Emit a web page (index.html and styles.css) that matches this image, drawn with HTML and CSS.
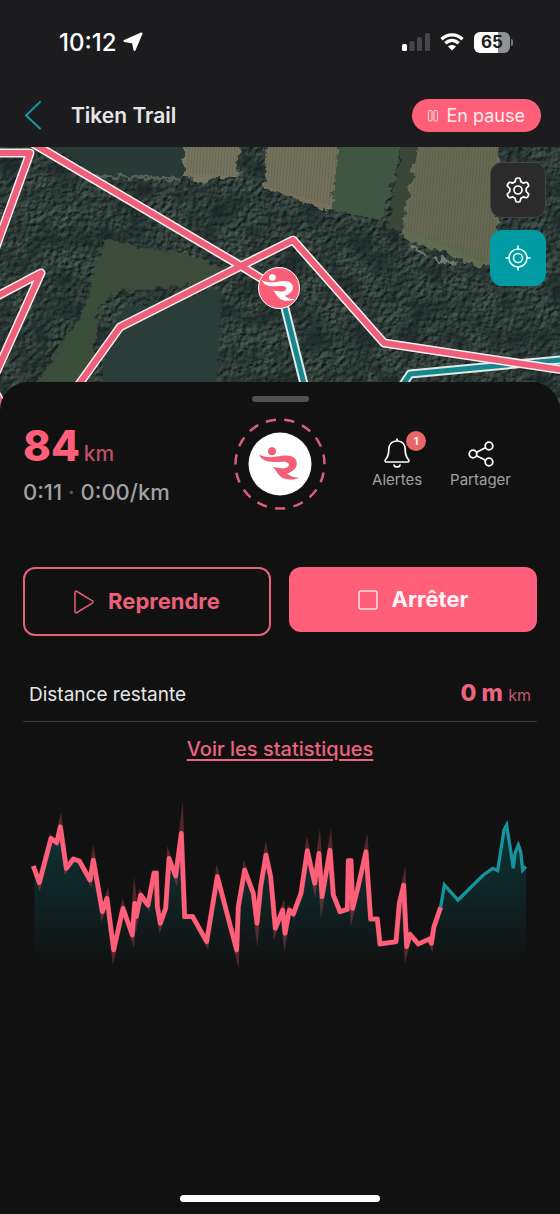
FILE: index.html
```html
<!DOCTYPE html>
<html lang="fr">
<head>
<meta charset="utf-8">
<meta name="viewport" content="width=device-width, initial-scale=1">
<title>Tiken Trail</title>
<link rel="stylesheet" href="styles.css">
</head>
<body>
<svg class="defs" aria-hidden="true">
  <symbol id="runner" viewBox="0 0 188 188">
    <circle cx="70" cy="56" r="12"/>
    <path d="M32 66C50 77 80 74 104 69C130 65 147 78 144 96C142 110 128 117 115 123C126 131 138 135 152 135C136 143 108 142 96 132C85 122 82 112 73 103L98 107C113 108 124 100 120 93C114 84 96 88 80 88C60 89 38 84 32 66Z"/>
  </symbol>
</svg>
<header class="top">
  <div class="status">
    <div class="status-time">
      <span>10:12</span>
      <svg width="20" height="20" viewBox="0 0 20 20"><path d="M18.500 1.500L11.500 18L10 10.500L1.500 9Z" fill="#fff" stroke="#fff" stroke-width="2" stroke-linejoin="round"/></svg>
    </div>
    <div class="status-icons">
      <svg width="28" height="20" viewBox="0 0 28 20"><rect y="12" width="5" height="7" rx="1.500" fill="#fff"/><g fill="#47474a"><rect x="7.500" y="9" width="5" height="10" rx="1.500"/><rect x="15" y="5" width="5" height="14" rx="1.500"/><rect x="23" y="1" width="5" height="18" rx="1.500"/></g></svg>
      <svg width="24" height="20" viewBox="0 0 24 20"><g fill="none" stroke="#fff" stroke-width="3.400"><path d="M1.500 7.200C7.500 1.400 16.500 1.400 22.500 7.200"/><path d="M5.300 11.200C9.300 7.500 14.700 7.500 18.700 11.200"/></g><path d="M8 14.500C10.300 12.500 13.700 12.500 16 14.500L12 18.600Z" fill="#fff"/></svg>
      <div class="battery"><span>65</span></div>
    </div>
  </div>
  <div class="nav">
    <button class="back" aria-label="Retour"><svg width="18" height="30" viewBox="0 0 18 30"><path d="M16 1L2 14.500L16 27.500" fill="none" stroke="#0d9ba0" stroke-width="2" stroke-linecap="round" stroke-linejoin="round"/></svg></button>
    <h1>Tiken Trail</h1>
    <div class="pill">
      <svg width="10" height="12" viewBox="0 0 10 12" fill="none" stroke="#ffe3e7"><rect x=".5" y=".5" width="3.500" height="10.500" rx="1"/><rect x="6" y=".5" width="3.500" height="10.500" rx="1"/></svg>
      <span>En pause</span>
    </div>
  </div>
</header>
<main>
  <section class="map">
    <svg class="map-view" viewBox="0 147 560 263" role="img" aria-label="Carte du parcours">
      <defs>
        <filter id="trees" x="0" y="0" width="100%" height="100%" color-interpolation-filters="sRGB">
          <feTurbulence type="fractalNoise" baseFrequency=".2" numOctaves="3" seed="8" result="n"/>
          <feDiffuseLighting in="n" surfaceScale="1.800" diffuseConstant="1" lighting-color="#4d625a"><feDistantLight azimuth="230" elevation="42"/></feDiffuseLighting>
        </filter>
        <filter id="shade" x="0" y="0" width="100%" height="100%" color-interpolation-filters="sRGB">
          <feTurbulence type="fractalNoise" baseFrequency=".04" numOctaves="4" seed="3"/>
          <feColorMatrix values="0 0 0 0 .1  0 0 0 0 .15  0 0 0 0 .15  1.800 0 0 0 -.65"/>
        </filter>
        <filter id="rough" x="-5%" y="-5%" width="110%" height="110%" color-interpolation-filters="sRGB">
          <feTurbulence type="fractalNoise" baseFrequency=".12" numOctaves="3" seed="5" result="n"/>
          <feDisplacementMap in="SourceGraphic" in2="n" scale="12" xChannelSelector="R" yChannelSelector="G"/>
        </filter>
        <pattern id="rows" width="3" height="8" patternUnits="userSpaceOnUse" patternTransform="rotate(5)"><rect width="1" height="8" fill="#3f4a3c" fill-opacity=".3"/></pattern>
      </defs>
      <rect y="147" width="560" height="263" fill="#2d3b36"/>
      <rect y="147" width="560" height="263" filter="url(#trees)"/>
      <rect y="147" width="560" height="263" filter="url(#shade)"/>
      <g filter="url(#rough)">
        <path d="M42 143H184V177L140 178L96 173Z" fill="#273a36"/>
        <path d="M92 176L182 179" stroke="#59625a" stroke-width="3"/>
        <path d="M184 143H240L238 178L212 178L204 184L184 176Z" fill="#77755f"/>
        <path d="M267 143H338L332 210L302 202L264 188Z" fill="#74715c"/>
        <path d="M338 143H402L392 180L382 222L332 210Z" fill="#3f5742"/>
        <path d="M402 143H422L402 230H388Z" fill="#394638"/>
        <path d="M419 143H498L498 262L482 265L402 230Z" fill="#686a54"/>
        <path d="M402 228L484 254L482 268L402 237Z" fill="#626a51"/>
        <path d="M104 237L135 246L180 253L216 265L236 270L210 282L168 287L112 292L98 310L94 350L84 386H34L52 360L84 310Z" fill="#3c4b3a"/>
        <path d="M102 240L82 320L44 386H80L95 310Z" fill="#3a4f3a"/>
        <path d="M120 308L170 298L221 288L220 330L216 386H104L106 352Z" fill="#2a3d38"/>
        <path d="M412 247L426 253M433 257L458 265" stroke="#6f7872" stroke-width="3"/>
      </g>
      <path d="M186 147H240L238 176L186 174ZM267 147H338L332 206L264 186ZM419 147H498V260L482 262L404 230Z" fill="url(#rows)"/>
      <g fill="none" stroke-linejoin="round" stroke-linecap="round">
        <g stroke="#dfe9e8" stroke-width="9"><path d="M283 300L306 392M398 392L410 374L570 359"/></g>
        <g stroke="#16888d" stroke-width="5"><path d="M283 300L306 392M398 392L410 374L570 359"/></g>
        <g stroke="#fbf0f0" stroke-width="9"><path d="M-10 153H30L-8 258M34 144L241 266L280 290M-10 300L41 273L-10 386M-8 386L2 405M72 394L120 327L241 266L293 240L384 343L570 371"/></g>
        <g stroke="#ee5f7b" stroke-width="6"><path d="M-10 153H30L-8 258M34 144L241 266L280 290M-10 300L41 273L-10 386M-8 386L2 405M72 394L120 327L241 266L293 240L384 343L570 371"/></g>
      </g>
      <circle cx="279" cy="288" r="20.500" fill="#fb5f78" stroke="#fff"/>
      <use href="#runner" x="253" y="262" width="52" height="52" fill="#fff"/>
    </svg>
    <div class="map-tools">
      <button class="tool" aria-label="Réglages"><svg width="28" height="28" viewBox="0 0 28 28" fill="none" stroke="#fff" stroke-width="1.700" stroke-linejoin="round"><circle cx="14" cy="14" r="4"/><path d="M11.700 3.300Q12 2 13.200 2H14.800Q16 2 16.300 3.300L16.900 5.800L19.200 7.100L21.700 6.400Q22.900 6 23.600 7.100L24.400 8.500Q25 9.700 24.100 10.500L22.200 12.500V15.500L24.100 17.500Q25 18.300 24.400 19.500L23.600 20.900Q22.900 22 21.700 21.600L19.200 20.900L16.900 22.200L16.300 24.700Q16 26 14.800 26H13.200Q12 26 11.700 24.700L11.100 22.200L8.800 20.900L6.300 21.600Q5.100 22 4.400 20.900L3.600 19.500Q3 18.300 3.900 17.500L5.800 15.500V12.500L3.900 10.500Q3 9.700 3.600 8.500L4.400 7.100Q5.100 6 6.300 6.400L8.800 7.100L11.100 5.800Z"/></svg></button>
      <button class="tool tool-active" aria-label="Me localiser"><svg width="26" height="26" viewBox="0 0 26 26" fill="none" stroke="#e9ffff" stroke-width="1.600" stroke-linecap="round"><circle cx="13" cy="13" r="9"/><circle cx="13" cy="13" r="4.500"/><path d="M13 1V4M13 22V25M1 13H4M22 13H25"/></svg></button>
    </div>
  </section>
  <section class="sheet">
    <div class="handle"></div>
    <div class="summary">
      <div class="figures">
        <p class="distance"><strong>84</strong><span>km</span></p>
        <p class="pace">0:11 <i>·</i> 0:00/km</p>
      </div>
      <svg class="badge" width="92" height="92" viewBox="0 0 92 92" role="img" aria-label="Coureur">
        <circle cx="46" cy="46" r="44.500" fill="none" stroke="#dc5f78" stroke-width="2.500" stroke-dasharray="10.200 8.440" stroke-dashoffset="10"/>
        <circle cx="46" cy="46" r="31.500" fill="#fff"/>
        <use href="#runner" x="14.500" y="14.500" width="63" height="63" fill="#f25f77"/>
      </svg>
      <div class="actions">
        <button class="action">
          <svg width="28" height="30" viewBox="0 0 28 30" fill="none" stroke="#fff" stroke-width="1.700" stroke-linecap="round" stroke-linejoin="round"><path d="M14 1V3M14 3C8.500 3 5.800 7 5.800 11.500C5.800 17 5 19 2.300 22C1.800 23 2.200 24 3.300 24H24.700C25.800 24 26.200 23 25.700 22C23 19 22.200 17 22.200 11.500C22.200 7 19.500 3 14 3ZM11 27C11.500 29.500 16.500 29.500 17 27"/></svg>
          <span>Alertes</span>
          <b class="count">1</b>
        </button>
        <button class="action">
          <svg width="28" height="30" viewBox="0 0 28 30" fill="none" stroke="#fff" stroke-width="1.800"><circle cx="6" cy="16" r="3.800"/><circle cx="22" cy="8" r="3.800"/><circle cx="22" cy="24" r="3.800"/><path d="M9.500 14.300L18.500 9.700M9.500 17.700L18.500 22.300"/></svg>
          <span>Partager</span>
        </button>
      </div>
    </div>
    <div class="controls">
      <button class="control control-outline"><svg width="20" height="24" viewBox="0 0 20 24"><path d="M1 2.500Q1 .5 3 1.500L18 10.500Q20 12 18 13.500L3 22.500Q1 23.500 1 21.500Z" fill="none" stroke="#e25f7a" stroke-width="1.500"/></svg><span>Reprendre</span></button>
      <button class="control control-solid"><svg width="20" height="20" viewBox="0 0 20 20"><rect x="1" y="1" width="18" height="18" rx="2" fill="none" stroke="#ffdde3" stroke-width="1.500"/></svg><span>Arrêter</span></button>
    </div>
    <div class="remaining"><span>Distance restante</span><span class="remaining-value"><strong>0 m</strong> <small>km</small></span></div>
    <a class="stats-link" href="#stats">Voir les statistiques</a>
    <svg class="chart" id="stats" viewBox="9 0 1542 570" role="img" aria-label="Profil du parcours">
      <defs>
        <linearGradient id="fade" gradientUnits="userSpaceOnUse" x1="0" y1="120" x2="0" y2="520"><stop offset="0" stop-color="#078087" stop-opacity=".3"/><stop offset=".5" stop-color="#078087" stop-opacity=".17"/><stop offset="1" stop-color="#078087" stop-opacity="0"/></linearGradient>
      </defs>
      <path fill="url(#fade)" d="M43 520V228L58 278L93 145L110 158L121 115L139 235L160 207L178 213L210 270L220 215L247 365L261 330L281 480L309 355L337 435L344 345L349 380L362 315L384 345L406 243L412 350L421 400L437 355L447 210L467 258L484 130L494 380H518L560 455L592 262L650 480L655 350L674 245L700 310L711 400L722 290L738 200L752 260L766 415L788 360L795 430L808 360L820 372L843 310L862 185L884 280L897 190L906 320L930 185L940 315L960 365L982 358L988 206L998 355L1012 300L1038 190L1052 387H1072L1080 462L1128 455L1138 340L1151 290L1160 470L1170 433L1195 462L1228 447L1234 460L1242 410L1262 352L1273 285L1314 330L1390 255L1418 235L1433 242L1452 120L1460 105L1480 235L1485 190L1495 165L1502 185L1508 240L1518 230V520Z"/>
      <g fill="none">
        <path stroke="#15949b" stroke-width="10" d="M1262 352L1273 285L1314 330L1390 255L1418 235L1433 242L1452 120L1460 105L1480 235L1485 190L1495 165L1502 185L1508 240L1518 230"/>
        <path class="halo" d="M40 228L58 278L93 145L110 158L121 110L139 235L160 207L178 213L210 270L220 210L247 365L261 325L281 480L309 355L337 435L344 340L349 380L362 315L384 345L402 249H409L412 350L421 400L437 355L447 205L467 258L484 130L494 380H518L560 455L592 260L650 480L655 350L674 240L700 310L711 400L722 290L738 195L752 260L766 415L788 360L795 430L808 360L820 372L843 310L862 182L884 280L897 190L906 320L930 180L940 315L960 365L982 358L985 212H993L998 355L1012 300L1038 185L1052 387H1072L1080 462L1128 455L1138 340L1151 285L1160 470L1170 433L1195 462L1228 447L1234 460L1242 410L1262 352"/>
        <path class="line" d="M40 228L58 278L93 145L110 158L121 110L139 235L160 207L178 213L210 270L220 210L247 365L261 325L281 480L309 355L337 435L344 340L349 380L362 315L384 345L402 249H409L412 350L421 400L437 355L447 205L467 258L484 130L494 380H518L560 455L592 260L650 480L655 350L674 240L700 310L711 400L722 290L738 195L752 260L766 415L788 360L795 430L808 360L820 372L843 310L862 182L884 280L897 190L906 320L930 180L940 315L960 365L982 358L985 212H993L998 355L1012 300L1038 185L1052 387H1072L1080 462L1128 455L1138 340L1151 285L1160 470L1170 433L1195 462L1228 447L1234 460L1242 410L1262 352"/>
      </g>
    </svg>
    <div class="home-bar"></div>
  </section>
</main>
</body>
</html>
```

FILE: styles.css
```css
* { box-sizing: border-box; }

body {
  margin: 0;
  min-height: 100vh;
  display: flex;
  flex-direction: column;
  background: #111;
  color: #e6e6e6;
  font-family: Inter, "Liberation Sans", sans-serif;
}

h1, p { margin: 0; }

button {
  border: 0;
  padding: 0;
  background: none;
  color: inherit;
  font: inherit;
  cursor: pointer;
}

svg { flex: none; }
.defs { position: absolute; width: 0; height: 0; }

.top { background: #1c1c1e; }

.status {
  display: flex;
  justify-content: space-between;
  align-items: center;
  height: 84px;
  padding: 0 50px 0 59px;
}

.status-time {
  display: flex;
  align-items: center;
  gap: 7px;
  color: #fff;
  font-size: 24px;
  font-weight: 500;
}

.status-icons { display: flex; align-items: center; gap: 10px; }

.battery {
  position: relative;
  width: 36px;
  height: 21px;
  border-radius: 6px;
  background: linear-gradient(90deg, #fff 66%, #929294 66%);
  color: #1c1c1e;
  font-size: 17px;
  font-weight: 700;
  line-height: 21px;
  text-align: center;
}

.battery::after {
  content: "";
  position: absolute;
  left: 37px;
  top: 7px;
  width: 2px;
  height: 7px;
  border-radius: 0 2px 2px 0;
  background: #77777a;
}

.nav {
  display: flex;
  align-items: center;
  height: 63px;
  padding: 0 19px 0 24px;
}

.back { display: flex; }

.nav h1 {
  flex: 1;
  margin-left: 29px;
  font-size: 21px;
  font-weight: 600;
}

.pill {
  display: flex;
  align-items: center;
  gap: 9px;
  height: 33px;
  padding: 0 16px;
  border-radius: 17px;
  background: #ff5f78;
  color: #ffedef;
  font-size: 18px;
}

main { flex: 1; display: flex; flex-direction: column; }

.map { position: relative; overflow: hidden; }
.map-view { display: block; width: 100%; }

.map-tools {
  position: absolute;
  top: 15px;
  right: 14px;
  display: grid;
  gap: 12px;
}

.tool {
  display: grid;
  place-items: center;
  width: 56px;
  height: 56px;
  border: 1px solid #454547;
  border-radius: 12px;
  background: #2b2b2c;
}

.tool-active { border-color: #019ba3; background: #019ba3; }

.sheet {
  position: relative;
  flex: 1;
  display: flex;
  flex-direction: column;
  margin-top: -28px;
  padding: 14px 23px 12px;
  border-radius: 28px 28px 0 0;
  background: #111;
}

.handle {
  align-self: center;
  width: 57px;
  height: 6px;
  border-radius: 3px;
  background: #515151;
}

.summary {
  display: grid;
  grid-template-columns: 1fr auto 1fr;
  align-items: center;
  margin-top: 16px;
}

.distance {
  display: flex;
  align-items: baseline;
  gap: 4px;
  color: #ff5f78;
  line-height: 48px;
}
.distance strong { font-size: 42px; font-weight: 800; }
.distance span { color: #bd5065; font-size: 21px; font-weight: 500; }

.pace {
  color: #a1a1a1;
  font-size: 22px;
  font-weight: 500;
  line-height: 28px;
}
.pace i { color: #5b5b5b; font-style: normal; }

.actions {
  display: flex;
  justify-content: flex-end;
  gap: 28px;
  padding-right: 26px;
}

.action {
  position: relative;
  display: grid;
  justify-items: center;
  gap: 2px;
  color: #a1a1a1;
  font-size: 15px;
  line-height: 20px;
}

.count {
  position: absolute;
  top: -7px;
  left: 50%;
  width: 20px;
  height: 20px;
  margin-left: 9px;
  border-radius: 50%;
  background: #e56769;
  color: #fff;
  font-size: 11px;
  font-weight: 600;
}

.controls {
  display: grid;
  grid-template-columns: 1fr 1fr;
  align-items: start;
  gap: 18px;
  margin-top: 57px;
}

.control {
  display: flex;
  align-items: center;
  justify-content: center;
  gap: 14px;
  padding: 20px;
  border-radius: 12px;
  font-size: 22px;
  font-weight: 700;
  line-height: 25px;
}

.control-outline { border: 2px solid #e8627e; color: #eb6079; }
.control-solid { background: #ff5f78; color: #fff5f6; }

.remaining {
  display: flex;
  align-items: baseline;
  justify-content: space-between;
  margin-top: 29px;
  padding: 14px 6px 12px;
  border-bottom: 1px solid #3b3b3b;
  font-size: 19px;
  line-height: 28px;
}

.remaining-value { color: #eb6480; }
.remaining strong { font-size: 23px; font-weight: 800; }
.remaining small { font-size: 16px; color: #c65770; }

.stats-link {
  align-self: center;
  margin-top: 14px;
  color: #eb6480;
  font-size: 20px;
  font-weight: 500;
  line-height: 26px;
  text-underline-offset: 3px;
}

.chart { display: block; width: 100%; margin-top: 28px; }
.halo { stroke: #ff5f78; stroke-opacity: .27; stroke-width: 16; stroke-miterlimit: 12; }
.line { stroke: #ff5f78; stroke-width: 14; stroke-linejoin: round; }

.home-bar {
  align-self: center;
  width: 200px;
  height: 7px;
  margin-top: auto;
  border-radius: 4px;
  background: #fff;
}
```
